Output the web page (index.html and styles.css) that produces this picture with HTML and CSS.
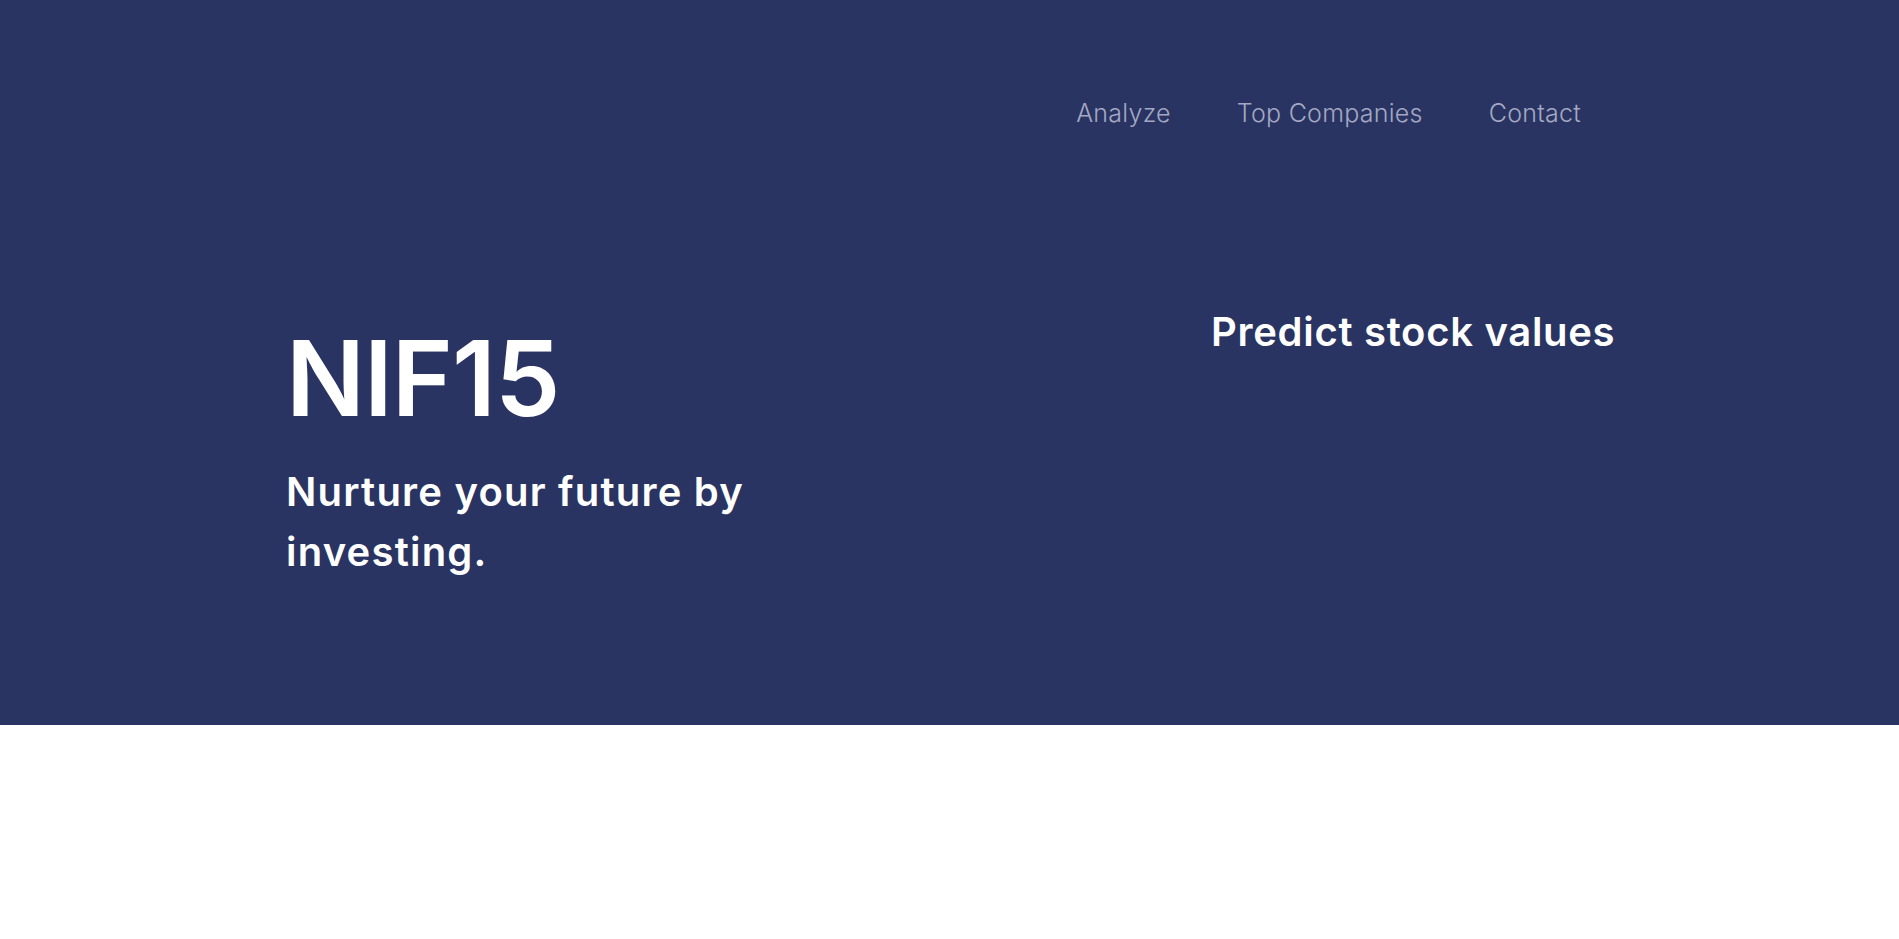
FILE: index.html
```html
<!DOCTYPE html>
<html lang="en">
<head>
<meta charset="utf-8">
<title>NIF15</title>
<link rel="stylesheet" href="styles.css">
</head>
<body>
<section class="hero">
  <header class="topbar">
    <nav class="nav">
      <a class="nav-link" href="#">Analyze</a>
      <a class="nav-link" href="#">Top Companies</a>
      <a class="nav-link" href="#">Contact</a>
    </nav>
  </header>
  <div class="hero-body">
    <div class="hero-left">
      <h1 class="brand">NIF15</h1>
      <p class="tagline">Nurture your future by investing.</p>
    </div>
    <div class="hero-right">
      <h2 class="predict">Predict stock values</h2>
    </div>
  </div>
</section>
</body>
</html>
```
FILE: styles.css
```css
* { box-sizing: border-box; }
html, body { margin: 0; padding: 0; background: #ffffff; }
body { font-family: Inter, "Open Sans", sans-serif; }

.hero {
  background: #293462;
  height: 725px;
  display: flex;
  flex-direction: column;
}

.topbar {
  display: flex;
  justify-content: flex-end;
  padding: 97px 318px 0 0;
}
.nav { display: flex; gap: 66px; }
.nav-link {
  color: #a4a8c2;
  text-decoration: none;
  font-size: 25px;
  font-weight: 300;
  line-height: 32px;
  letter-spacing: 0.25px;
}

.hero-body {
  display: flex;
  padding: 179px 0 0 286px;
}
.hero-left { width: 925px; }
.brand {
  margin: 18px 0 0;
  color: #fff;
  font-size: 104px;
  font-weight: 600;
  line-height: 1;
  letter-spacing: -1px;
}
.tagline {
  margin: 32px 0 0;
  color: #fff;
  font-size: 40px;
  font-weight: 600;
  line-height: 60px;
  letter-spacing: 1.2px;
  width: 480px;
}
.predict {
  margin: 0;
  color: #fff;
  font-size: 40px;
  font-weight: 600;
  line-height: 1.2;
  letter-spacing: 0.7px;
}
```
